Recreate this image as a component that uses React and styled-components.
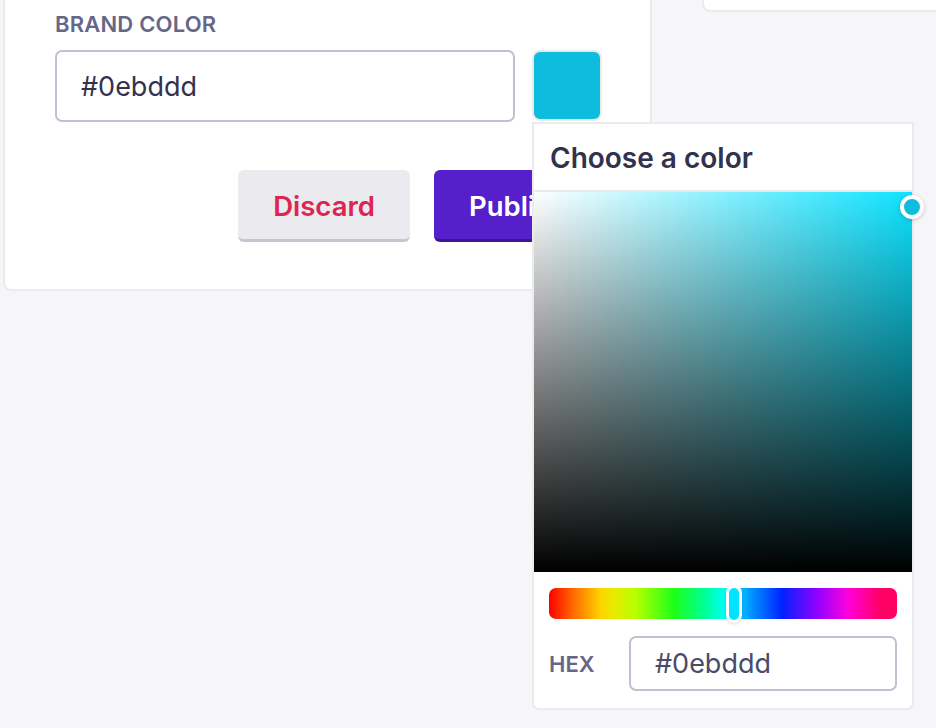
import React from 'react';
import styled, { createGlobalStyle } from 'styled-components';

const GlobalStyle = createGlobalStyle`
  body {
    margin: 0;
    background-color: #f6f6f9;
    font-family: Inter, "Noto Sans", "Liberation Sans", sans-serif;
    color: #32324d;
  }
`;

const Page = styled.div`
  display: flex;
  align-items: flex-start;
  gap: 50px;
  padding-left: 3px;
  min-height: 728px;
  overflow: hidden;
`;

const Card = styled.section`
  box-sizing: border-box;
  flex: none;
  width: 649px;
  min-width: 0;
  margin-top: -20px;
  padding: 30px 48px 47px 50px;
  background-color: #ffffff;
  border: 2px solid #eaeaef;
  border-radius: 8px;
`;

const SideCard = styled.div`
  box-sizing: border-box;
  flex: none;
  width: 300px;
  height: 32px;
  margin-top: -20px;
  background-color: #ffffff;
  border: 2px solid #eaeaef;
  border-radius: 8px;
`;

const Label = styled.label`
  display: block;
  font-size: 22px;
  line-height: 24px;
  font-weight: 600;
  letter-spacing: 0.2px;
  text-transform: uppercase;
  color: #666687;
`;

const FieldRow = styled.div`
  display: flex;
  align-items: flex-start;
  gap: 17px;
  margin-top: 14px;
`;

const TextInput = styled.input`
  box-sizing: border-box;
  min-width: 0;
  width: ${p => p.$width || '0'};
  flex: ${p => (p.$width ? 'none' : '1 1 0')};
  height: ${p => p.$height}px;
  padding: 0 24px;
  border: 2px solid #c0c0cf;
  border-radius: 7px;
  background: #ffffff;
  font-family: inherit;
  font-size: 27px;
  color: ${p => (p.$muted ? '#4a4a6a' : '#32324d')};
  outline: none;
`;

const SwatchWrap = styled.div`
  position: relative;
  flex: none;
`;

const Swatch = styled.button`
  display: block;
  box-sizing: border-box;
  width: 70px;
  height: 71px;
  padding: 0;
  border: 2px solid #eaeaef;
  border-radius: 8px;
  background-color: ${p => p.$color};
`;

const Actions = styled.div`
  display: flex;
  justify-content: flex-end;
  gap: 24px;
  margin-top: 48px;
`;

const Button = styled.button`
  box-sizing: border-box;
  height: 72px;
  padding: 2px 35px 0;
  border: none;
  border-bottom: 3px solid ${p => (p.$primary ? '#3b168f' : '#c6c6d3')};
  border-radius: 6px;
  background-color: ${p => (p.$primary ? '#5520cc' : '#eaeaef')};
  color: ${p => (p.$primary ? '#ffffff' : '#de2450')};
  font-family: inherit;
  font-size: 27.5px;
  font-weight: 600;
`;

const Popover = styled.div`
  position: absolute;
  top: calc(100% + 1px);
  left: 0;
  z-index: 2;
  box-sizing: border-box;
  width: 382px;
  background-color: #ffffff;
  border: 2px solid #eaeaef;
  border-radius: 0 0 7px 7px;
`;

const PopoverTitle = styled.div`
  height: 66px;
  padding: 0 16px;
  border-bottom: 2px solid #eaeaef;
  font-size: 28px;
  line-height: 68px;
  font-weight: 600;
  color: #32324d;
`;

const Saturation = styled.div`
  position: relative;
  height: 380px;
  background-color: ${p => p.$hue};
  background-image:
    linear-gradient(to top, #000000, rgba(0, 0, 0, 0)),
    linear-gradient(to right, #ffffff, rgba(255, 255, 255, 0));
`;

const Pointer = styled.div`
  position: absolute;
  box-sizing: border-box;
  width: 24px;
  height: 24px;
  transform: translate(-50%, -50%);
  border: 4px solid #ffffff;
  border-radius: 50%;
  background-color: ${p => p.$color};
  box-shadow: 0 1px 4px rgba(0, 0, 0, 0.2);
`;

const PickerBody = styled.div`
  display: flex;
  flex-direction: column;
  gap: 17px;
  padding: 16px 15px 17px;
`;

const Hue = styled.div`
  position: relative;
  height: 31px;
  border-radius: 7px;
  background: linear-gradient(
    to right,
    #ff0000 0%,
    #ff6a00 7%,
    #ffd500 15%,
    #e6ec00 19%,
    #b6ff00 25%,
    #1cff18 36%,
    #00ff9c 45%,
    #00ffff 51%,
    #0096ff 58%,
    #0022ff 67%,
    #9000ff 77%,
    #ff00dc 86%,
    #ff0066 95%,
    #ff0060 100%
  );
`;

const HueThumb = styled.div`
  position: absolute;
  top: 50%;
  box-sizing: border-box;
  width: 16px;
  height: 38px;
  transform: translate(-50%, -50%);
  border: 3px solid #ffffff;
  border-radius: 8px;
  background-color: #00e4ff;
  box-shadow: 0 1px 3px rgba(0, 0, 0, 0.15);
`;

const HexRow = styled.div`
  display: flex;
  align-items: center;
  justify-content: space-between;
`;

const HexLabel = styled.span`
  font-size: 22px;
  font-weight: 600;
  color: #666687;
`;

const App = () => {
  const value = '#0ebddd';

  return (
    <>
      <GlobalStyle />
      <Page>
        <Card>
          <Label htmlFor="brand-color">Brand color</Label>
          <FieldRow>
            <TextInput id="brand-color" $height={72} defaultValue={value} />
            <SwatchWrap>
              <Swatch $color={value} aria-label="Choose a color" />
              <Popover>
                <PopoverTitle>Choose a color</PopoverTitle>
                <Saturation $hue="#0ee3ff">
                  <Pointer $color={value} style={{ left: '100%', top: '4%' }} />
                </Saturation>
                <PickerBody>
                  <Hue>
                    <HueThumb style={{ left: '53.3%' }} />
                  </Hue>
                  <HexRow>
                    <HexLabel>HEX</HexLabel>
                    <TextInput $width="268px" $height={55} $muted defaultValue={value} />
                  </HexRow>
                </PickerBody>
              </Popover>
            </SwatchWrap>
          </FieldRow>
          <Actions>
            <Button>Discard</Button>
            <Button $primary>Publish</Button>
          </Actions>
        </Card>
        <SideCard />
      </Page>
    </>
  );
};

export default App;
